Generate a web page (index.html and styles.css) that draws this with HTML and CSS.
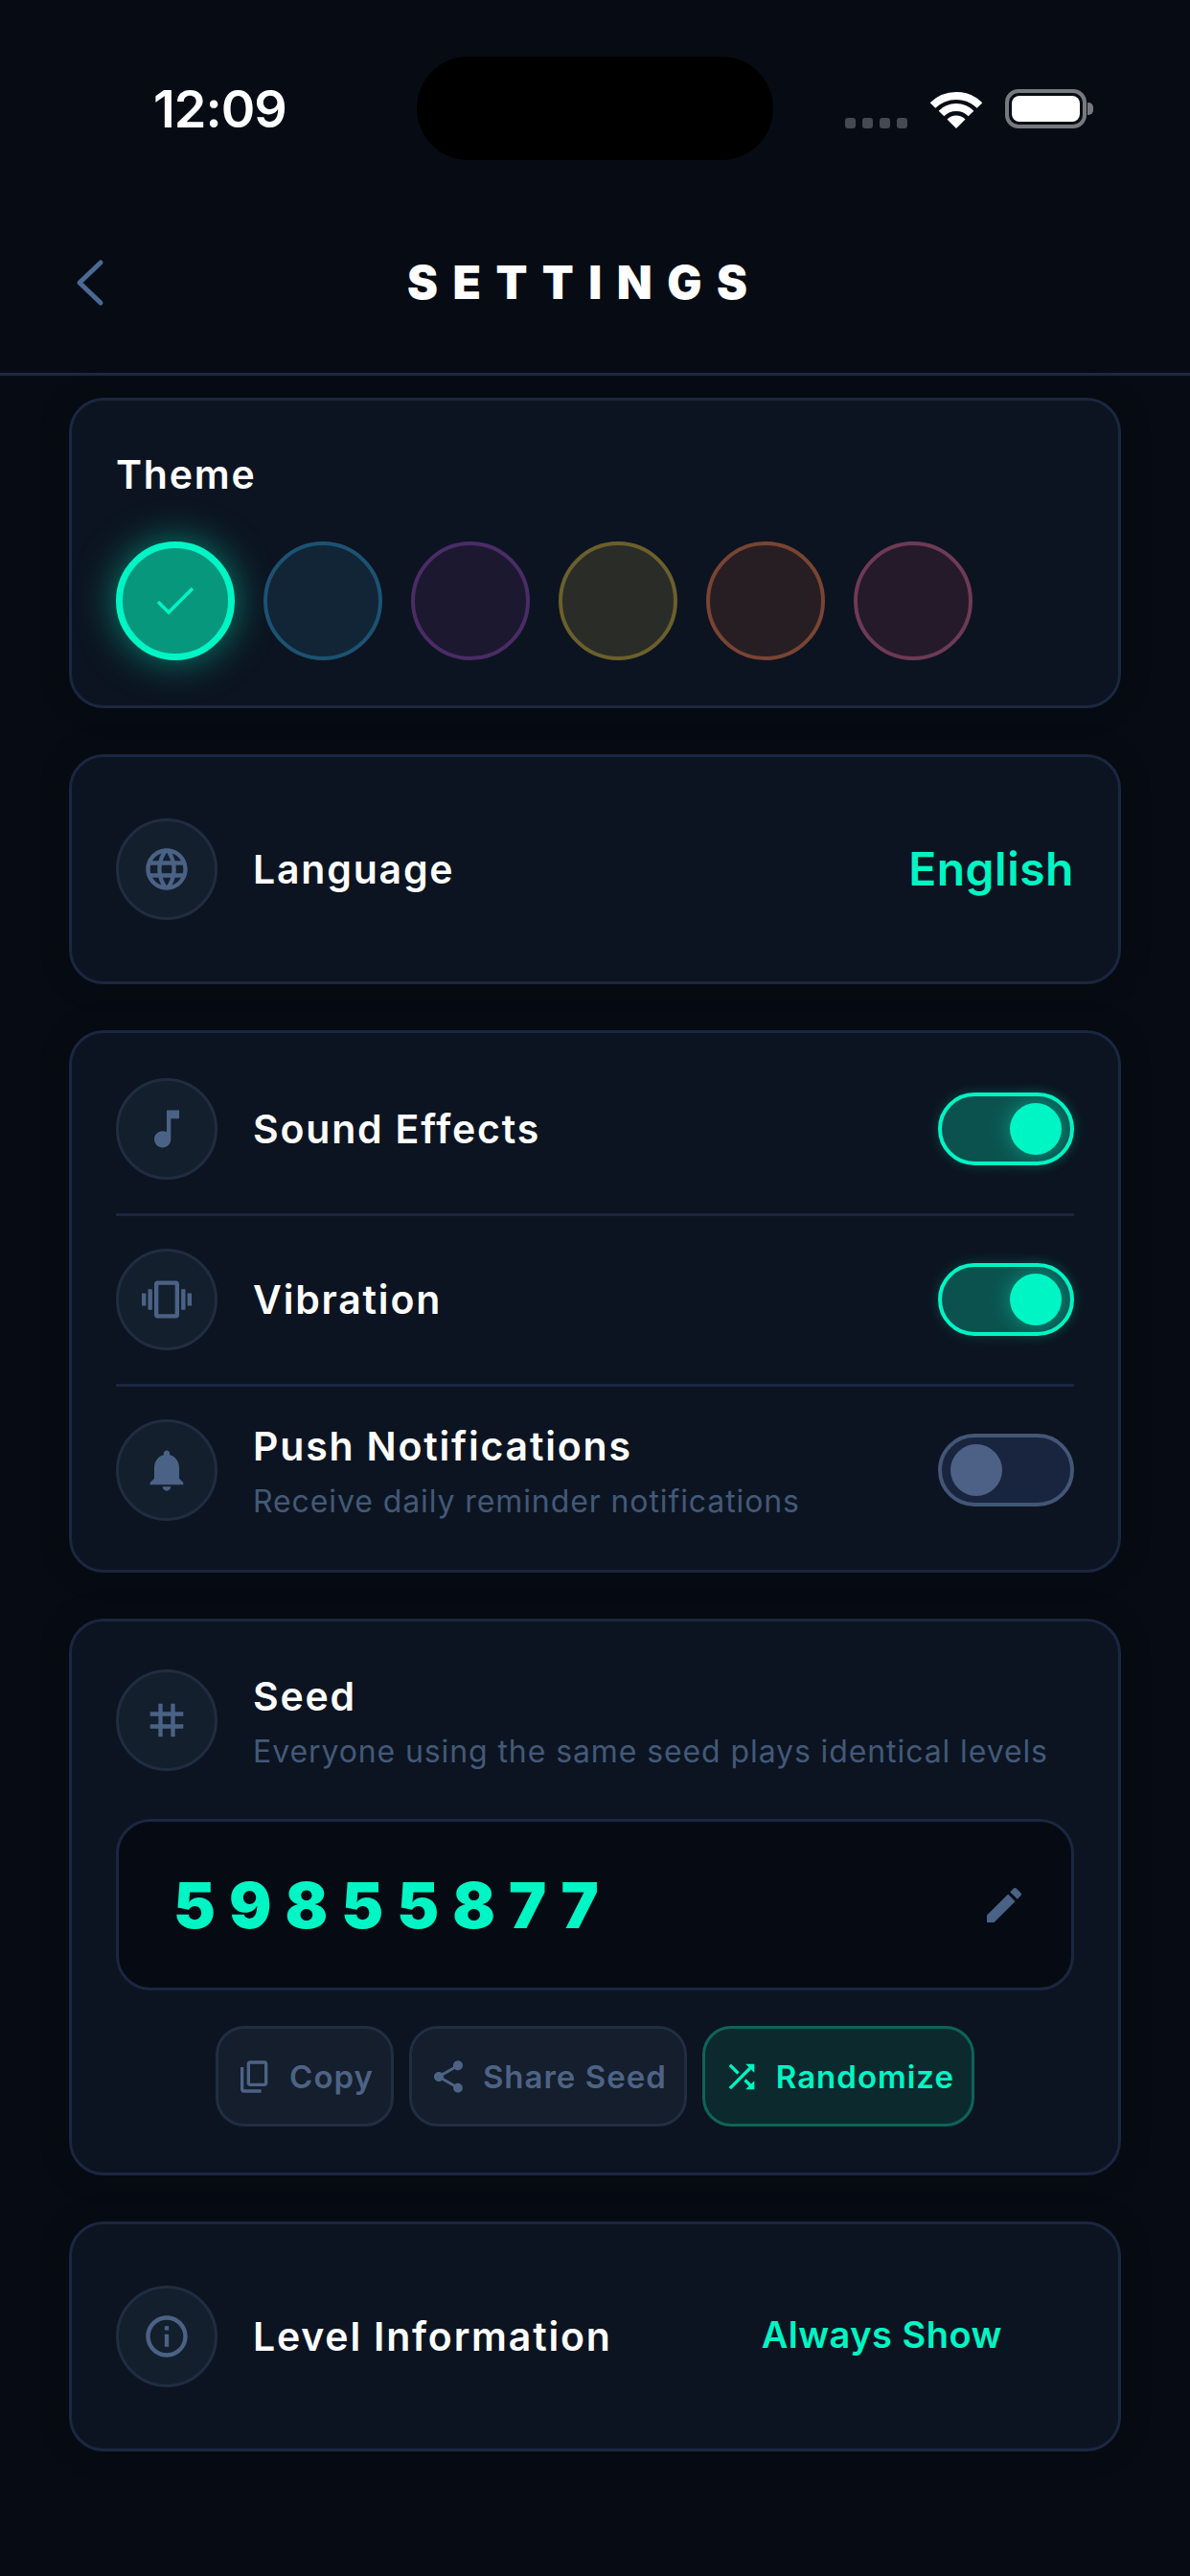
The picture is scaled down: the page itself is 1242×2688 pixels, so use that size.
FILE: index.html
```html
<!DOCTYPE html>
<html lang="en">
<head>
    <meta charset="UTF-8">
    <meta name="viewport" content="width=device-width, initial-scale=1.0">
    <title>Settings</title>
    <link rel="stylesheet" href="styles.css">
</head>
<body>
    <!-- Status bar -->
    <div class="status-bar">
        <div class="time">12:09</div>
        <div class="island"></div>
        <div class="status-icons">
            <div class="signal"><span></span><span></span><span></span><span></span></div>
            <svg class="wifi" width="56" height="41" viewBox="0 0 56 41">
                <path d="M3.500 17A35 35 0 0 1 52.500 17" fill="none" stroke="#fff" stroke-width="8"/>
                <path d="M12.500 25.500A22 22 0 0 1 43.500 25.500" fill="none" stroke="#fff" stroke-width="8"/>
                <path d="M28 41L18.500 31.500A13.500 13.500 0 0 1 37.500 31.500Z" fill="#fff"/>
            </svg>
            <div class="battery"><div class="battery-fill"></div></div>
            <div class="battery-nub"></div>
        </div>
    </div>

    <div class="topbar">
        <svg class="back" width="32" height="50" viewBox="0 0 32 50">
            <path d="M28 4L6 25l22 21" fill="none" stroke="#4a6a94" stroke-width="5" stroke-linecap="round" stroke-linejoin="round"/>
        </svg>
        <h1>SETTINGS</h1>
    </div>

    <div class="content">
        <!-- Theme -->
        <div class="card theme-card">
            <div class="theme-title">Theme</div>
            <div class="swatches">
                <div class="swatch selected">
                    <svg width="44" height="32" viewBox="0 0 44 32">
                        <path d="M4 17l11 11L40 3" fill="none" stroke="#00f5c4" stroke-width="3.500"/>
                    </svg>
                </div>
                <div class="swatch blue"></div>
                <div class="swatch purple"></div>
                <div class="swatch yellow"></div>
                <div class="swatch orange"></div>
                <div class="swatch pink"></div>
            </div>
        </div>

        <!-- Language -->
        <div class="card single">
            <div class="icon-circle">
                <svg class="icon" viewBox="0 0 24 24"><path d="M11.990 2C6.470 2 2 6.480 2 12s4.470 10 9.990 10C17.520 22 22 17.520 22 12S17.520 2 11.990 2zm6.930 6h-2.950c-.32-1.250-.78-2.450-1.380-3.560 1.840.63 3.370 1.910 4.330 3.560zM12 4.040c.83 1.200 1.480 2.530 1.910 3.960h-3.820c.43-1.430 1.080-2.760 1.910-3.960zM4.260 14C4.100 13.360 4 12.690 4 12s.1-1.360.26-2h3.380c-.08.66-.14 1.320-.14 2 0 .68.06 1.340.14 2H4.260zm.82 2h2.950c.32 1.250.78 2.450 1.380 3.560-1.840-.63-3.370-1.900-4.330-3.560zm2.950-8H5.080c.96-1.660 2.490-2.930 4.330-3.560C8.810 5.550 8.350 6.750 8.030 8zM12 19.960c-.83-1.200-1.480-2.530-1.910-3.960h3.820c-.43 1.430-1.080 2.760-1.910 3.960zM14.340 14H9.660c-.09-.66-.16-1.320-.16-2 0-.68.07-1.350.16-2h4.680c.09.65.16 1.320.16 2 0 .68-.07 1.340-.16 2zm.25 5.560c.6-1.110 1.060-2.310 1.380-3.560h2.950c-.96 1.650-2.490 2.930-4.330 3.560zM16.360 14c.08-.66.14-1.320.14-2 0-.68-.06-1.340-.14-2h3.380c.16.64.26 1.310.26 2s-.1 1.360-.26 2h-3.380z"/></svg>
            </div>
            <div class="label">Language</div>
            <div class="value">English</div>
        </div>

        <!-- Toggles -->
        <div class="card toggles">
            <div class="row">
                <div class="icon-circle">
                    <svg class="icon" viewBox="0 0 24 24"><path d="M12 3v10.550c-.59-.34-1.270-.55-2-.55-2.210 0-4 1.790-4 4s1.790 4 4 4 4-1.790 4-4V7h4V3h-6z"/></svg>
                </div>
                <div class="label">Sound Effects</div>
                <div class="toggle on"><div class="knob"></div></div>
            </div>
            <div class="row">
                <div class="icon-circle">
                    <svg class="icon" viewBox="0 0 24 24"><path d="M0 15h2V9H0v6zm3 2h2V7H3v10zm19-8v6h2V9h-2zm-3 8h2V7h-2v10zM16.500 3h-9C6.670 3 6 3.670 6 4.500v15c0 .83.67 1.500 1.500 1.500h9c.83 0 1.500-.67 1.500-1.500v-15c0-.83-.67-1.500-1.500-1.500zM16 19H8V5h8v14z"/></svg>
                </div>
                <div class="label">Vibration</div>
                <div class="toggle on"><div class="knob"></div></div>
            </div>
            <div class="row">
                <div class="icon-circle">
                    <svg class="icon" viewBox="0 0 24 24"><path d="M12 22c1.100 0 2-.9 2-2h-4c0 1.100.89 2 2 2zm6-6v-5c0-3.070-1.640-5.640-4.500-6.320V4c0-.83-.67-1.500-1.500-1.500s-1.500.67-1.500 1.500v.68C7.630 5.360 6 7.920 6 11v5l-2 2v1h16v-1l-2-2z"/></svg>
                </div>
                <div class="text">
                    <div class="label">Push Notifications</div>
                    <div class="desc">Receive daily reminder notifications</div>
                </div>
                <div class="toggle"><div class="knob"></div></div>
            </div>
        </div>

        <!-- Seed -->
        <div class="card seed-card">
            <div class="seed-head">
                <div class="icon-circle">
                    <svg class="icon" viewBox="0 0 24 24"><path d="M20 10V8h-4V4h-2v4h-4V4H8v4H4v2h4v4H4v2h4v4h2v-4h4v4h2v-4h4v-2h-4v-4h4zm-6 4h-4v-4h4v4z"/></svg>
                </div>
                <div class="text">
                    <div class="label">Seed</div>
                    <div class="desc">Everyone using the same seed plays identical levels</div>
                </div>
            </div>
            <div class="seed-box">
                <div class="seed-number">59855877</div>
                <svg class="icon" viewBox="0 0 24 24"><path d="M3 17.250V21h3.750L17.810 9.940l-3.750-3.750L3 17.250zM20.710 7.040c.39-.39.39-1.020 0-1.410l-2.340-2.340c-.39-.39-1.020-.39-1.410 0l-1.830 1.830 3.750 3.750 1.830-1.830z"/></svg>
            </div>
            <div class="seed-actions">
                <div class="btn">
                    <svg class="btn-icon" viewBox="0 0 24 24"><path d="M9 18c-.55 0-1.020-.2-1.410-.59C7.200 17.020 7 16.550 7 16V4c0-.55.2-1.020.59-1.410C7.980 2.200 8.450 2 9 2h9c.55 0 1.020.2 1.410.59.39.39.59.86.59 1.410v12c0 .55-.2 1.020-.59 1.410-.39.39-.86.59-1.410.59H9zm0-2h9V4H9v12zm-4 6c-.55 0-1.020-.2-1.410-.59C3.200 21.020 3 20.550 3 20V6h2v14h11v2H5z"/></svg>
                    Copy
                </div>
                <div class="btn">
                    <svg class="btn-icon" viewBox="0 0 24 24"><path d="M18 16.080c-.76 0-1.440.3-1.960.77L8.910 12.700c.05-.23.09-.46.09-.7s-.04-.47-.09-.7l7.050-4.110c.54.5 1.250.81 2.040.81 1.660 0 3-1.340 3-3s-1.340-3-3-3-3 1.340-3 3c0 .24.04.47.09.7L8.040 9.810C7.500 9.310 6.790 9 6 9c-1.660 0-3 1.340-3 3s1.340 3 3 3c.79 0 1.500-.31 2.040-.81l7.120 4.160c-.05.21-.08.43-.08.65 0 1.610 1.310 2.920 2.920 2.920s2.920-1.310 2.920-2.920-1.310-2.920-2.920-2.920z"/></svg>
                    Share Seed
                </div>
                <div class="btn active">
                    <svg class="btn-icon" viewBox="0 0 24 24"><path d="M10.590 9.170L5.410 4 4 5.410l5.170 5.170 1.420-1.410zM14.500 4l2.040 2.040L4 18.590 5.410 20 17.960 7.460 20 9.500V4h-5.500zm.33 9.410l-1.410 1.410 3.130 3.130L14.500 20H20v-5.500l-2.040 2.040-3.130-3.130z"/></svg>
                    Randomize
                </div>
            </div>
        </div>

        <!-- Level information -->
        <div class="card single">
            <div class="icon-circle">
                <svg class="icon" viewBox="0 0 24 24"><path d="M11 7h2v2h-2zm0 4h2v6h-2zm1-9C6.480 2 2 6.480 2 12s4.480 10 10 10 10-4.480 10-10S17.520 2 12 2zm0 18c-4.410 0-8-3.590-8-8s3.590-8 8-8 8 3.590 8 8-3.590 8-8 8z"/></svg>
            </div>
            <div class="label">Level Information</div>
            <div class="value small">Always Show</div>
        </div>
    </div>
</body>
</html>
```

FILE: styles.css
```css
* {
    box-sizing: border-box;
}
body {
    font-family: Inter, "Noto Sans", sans-serif;
    margin: 0;
    padding: 0;
    height: 2688px;
    overflow: hidden;
    background-color: #070c14;
    color: #fff;
}

/* status bar */
.status-bar {
    display: grid;
    grid-template-columns: 435px 372px 1fr;
    align-items: center;
    height: 108px;
    margin-top: 59px;
}
.time {
    padding-left: 160px;
    font-size: 54px;
    font-weight: 600;
    letter-spacing: -1px;
}
.island {
    height: 108px;
    background: #000;
    border-radius: 54px;
}
.status-icons {
    display: flex;
    align-items: center;
    padding-left: 75px;
}
.signal {
    display: flex;
    gap: 7px;
    align-self: flex-end;
    margin-right: 23px;
}
.signal span {
    width: 11px;
    height: 11px;
    border-radius: 3px;
    background: #454952;
}
.battery {
    width: 85px;
    height: 41px;
    margin-left: 23px;
    padding: 3px;
    border: 4px solid #77797e;
    border-radius: 14px;
}
.battery-fill {
    height: 100%;
    background: #fff;
    border-radius: 8px;
}
.battery-nub {
    width: 6px;
    height: 13px;
    margin-left: 1px;
    background: #77797e;
    border-radius: 0 5px 5px 0;
}

/* top bar */
.topbar {
    display: flex;
    align-items: center;
    height: 225px;
    padding: 33px 0 0 77px;
    border-bottom: 3px solid #1c2a44;
}
.back {
    flex-shrink: 0;
}
.topbar h1 {
    margin: 0;
    padding-left: 316px;
    font-size: 48px;
    line-height: 58px;
    font-weight: 900;
    letter-spacing: 15.500px;
}

/* cards */
.content {
    display: flex;
    flex-direction: column;
    gap: 48px;
    padding: 23px 72px 0;
}
.card {
    background: #0c1421;
    border: 3px solid #1b2741;
    border-radius: 36px;
    padding: 0 46px;
    box-shadow: 0 0 30px rgba(0, 0, 0, 0.25);
}
.single {
    display: flex;
    align-items: center;
    height: 240px;
}
.icon-circle {
    display: flex;
    align-items: center;
    justify-content: center;
    flex-shrink: 0;
    width: 106px;
    height: 106px;
    margin-right: 37px;
    background: #141f2d;
    border: 3px solid #202d41;
    border-radius: 50%;
}
.icon {
    width: 52px;
    height: 52px;
    fill: #4a6285;
}
.label {
    font-size: 41px;
    line-height: 48px;
    font-weight: 600;
    letter-spacing: 1.800px;
}
.text {
    padding-top: 3px;
}
.desc {
    margin-top: 14px;
    font-size: 32px;
    line-height: 40px;
    color: #435978;
    letter-spacing: 0.900px;
}
.value {
    margin-left: auto;
    margin-bottom: 2px;
    font-size: 48px;
    font-weight: 600;
    color: #00f5c4;
    letter-spacing: 0.500px;
}
.value.small {
    margin-bottom: 4px;
    padding-right: 75px;
    font-size: 38px;
}

/* theme */
.theme-card {
    height: 324px;
    padding-top: 48px;
}
.theme-title {
    font-size: 41px;
    line-height: 58px;
    font-weight: 600;
    letter-spacing: 1.800px;
    margin-bottom: 41px;
}
.swatches {
    display: flex;
    gap: 30px;
}
.swatch {
    display: flex;
    align-items: center;
    justify-content: center;
    width: 124px;
    height: 124px;
    border: 4px solid;
    border-radius: 50%;
}
.swatch.selected {
    background: #07977d;
    border: 7px solid #00f5c4;
    box-shadow: 0 0 40px rgba(0, 245, 196, 0.5);
}
.swatch.blue { background: #112536; border-color: #1c5272; }
.swatch.purple { background: #1c1830; border-color: #4a2c66; }
.swatch.yellow { background: #2a2c28; border-color: #6b5f2c; }
.swatch.orange { background: #271e24; border-color: #7a4432; }
.swatch.pink { background: #241a2a; border-color: #6e3a55; }

/* toggle rows */
.toggles {
    height: 566px;
    padding-top: 47px;
}
.row {
    display: flex;
    align-items: center;
    padding: 34px 0 35px;
    border-bottom: 3px solid #1b2741;
}
.row:first-child {
    padding-top: 0;
}
.row:last-child {
    padding-top: 34px;
    padding-bottom: 0;
    border-bottom: none;
}
.toggle {
    display: flex;
    align-items: center;
    width: 142px;
    height: 76px;
    margin-left: auto;
    padding: 0 9px;
    background: #19243f;
    border: 4px solid #435676;
    border-radius: 38px;
}
.knob {
    width: 54px;
    height: 54px;
    background: #4c6185;
    border-radius: 50%;
}
.toggle.on {
    justify-content: flex-end;
    background: #0b524e;
    border-color: #00f5c4;
    box-shadow: 0 0 14px rgba(0, 245, 196, 0.2);
}
.toggle.on .knob {
    background: #00f5c4;
    box-shadow: 0 0 22px rgba(0, 245, 196, 0.45);
}

/* seed */
.seed-card {
    height: 581px;
    padding-top: 50px;
}
.seed-head {
    display: flex;
    align-items: center;
}
.seed-box {
    display: flex;
    align-items: center;
    justify-content: space-between;
    height: 179px;
    margin-top: 50px;
    padding: 0 46px 0 57px;
    background: #060b13;
    border: 3px solid #1b2741;
    border-radius: 36px;
}
.seed-box .icon {
    width: 48px;
    height: 48px;
}
.seed-number {
    font-size: 66px;
    font-weight: 900;
    color: #00f5c4;
    letter-spacing: 14px;
}
.seed-actions {
    display: flex;
    justify-content: center;
    gap: 16px;
    margin-top: 37px;
}
.btn {
    display: flex;
    align-items: center;
    gap: 16px;
    height: 105px;
    padding: 0 18px;
    background: #141e2c;
    border: 3px solid #212e42;
    border-radius: 30px;
    font-size: 33px;
    font-weight: 600;
    letter-spacing: 1px;
    color: #4d6385;
}
.btn-icon {
    width: 40px;
    height: 40px;
    fill: #4d6385;
}
.btn.active {
    background: #0c2a2e;
    border-color: #0e6458;
    color: #00f5c4;
}
.btn.active .btn-icon {
    fill: #00f5c4;
}
```
